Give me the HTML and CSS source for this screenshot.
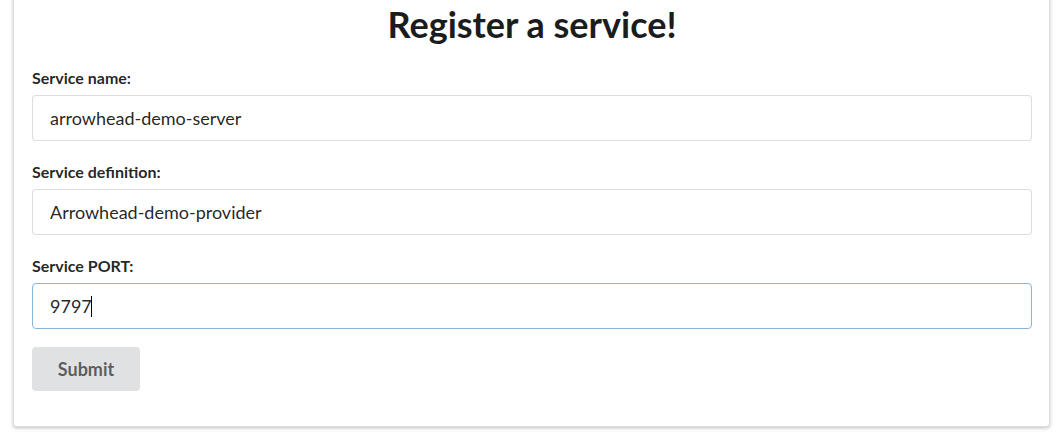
FILE: index.html
```html
<!DOCTYPE html>
<html lang="en">
<head>
<meta charset="utf-8">
<title>Register a service</title>
<link rel="stylesheet" href="styles.css">
</head>
<body>
<div class="page">
  <form class="card">
    <h1 class="title">Register a service!</h1>
    <div class="field">
      <label class="label" for="name">Service name:</label>
      <input class="input" id="name" type="text" value="arrowhead-demo-server">
    </div>
    <div class="field">
      <label class="label" for="def">Service definition:</label>
      <input class="input" id="def" type="text" value="Arrowhead-demo-provider">
    </div>
    <div class="field">
      <label class="label" for="port">Service PORT:</label>
      <div class="input-wrap">
        <input class="input focused" id="port" type="text" value="9797">
        <span class="caret"></span>
      </div>
    </div>
    <button class="button" type="button">Submit</button>
  </form>
</div>
</body>
</html>
```

FILE: styles.css
```css
html, body {
  margin: 0;
  padding: 0;
  background: #ffffff;
}
body {
  font-family: Lato, "Helvetica Neue", Arial, sans-serif;
  color: rgba(0, 0, 0, 0.87);
}
.page {
  padding: 0 10px 0 13px;
  overflow: hidden;
  height: 441px;
}
.card {
  margin-top: -6px;
  background: #fff;
  border: 1px solid rgba(34, 36, 38, 0.15);
  border-radius: 4px;
  box-shadow: 0 1px 3px 0 rgba(34, 36, 38, 0.2), 0 2px 5px 0 rgba(34, 36, 38, 0.08);
  padding: 9px 17px 35px 18px;
  display: flex;
  flex-direction: column;
  align-items: stretch;
}
.title {
  margin: 0 0 24px;
  font-size: 36px;
  font-weight: 700;
  line-height: 41px;
  text-align: center;
  color: #1b1c1d;
}
.field {
  display: flex;
  flex-direction: column;
  gap: 8px;
  margin-bottom: 22px;
}
.field:last-of-type {
  margin-bottom: 18px;
}
.label {
  font-size: 16px;
  font-weight: 700;
  line-height: 18px;
  color: rgba(0, 0, 0, 0.87);
}
.input-wrap {
  position: relative;
}
.input {
  box-sizing: border-box;
  display: block;
  height: 46px;
  width: 100%;
  margin: 0;
  padding: 0 17px;
  font-family: Lato, "Helvetica Neue", Arial, sans-serif;
  font-size: 18px;
  color: rgba(0, 0, 0, 0.87);
  background: #fff;
  border: 1px solid rgba(34, 36, 38, 0.15);
  border-radius: 4px;
  outline: none;
}
.input.focused {
  border-color: #85b7d9;
}
.caret {
  position: absolute;
  left: 59px;
  top: 13px;
  width: 1px;
  height: 21px;
  background: #000;
}
.button {
  align-self: flex-start;
  width: 108px;
  height: 44px;
  font-family: Lato, "Helvetica Neue", Arial, sans-serif;
  font-size: 18px;
  font-weight: 700;
  color: rgba(0, 0, 0, 0.6);
  background: #e0e1e2;
  border: none;
  border-radius: 4px;
  padding: 0;
}
```
